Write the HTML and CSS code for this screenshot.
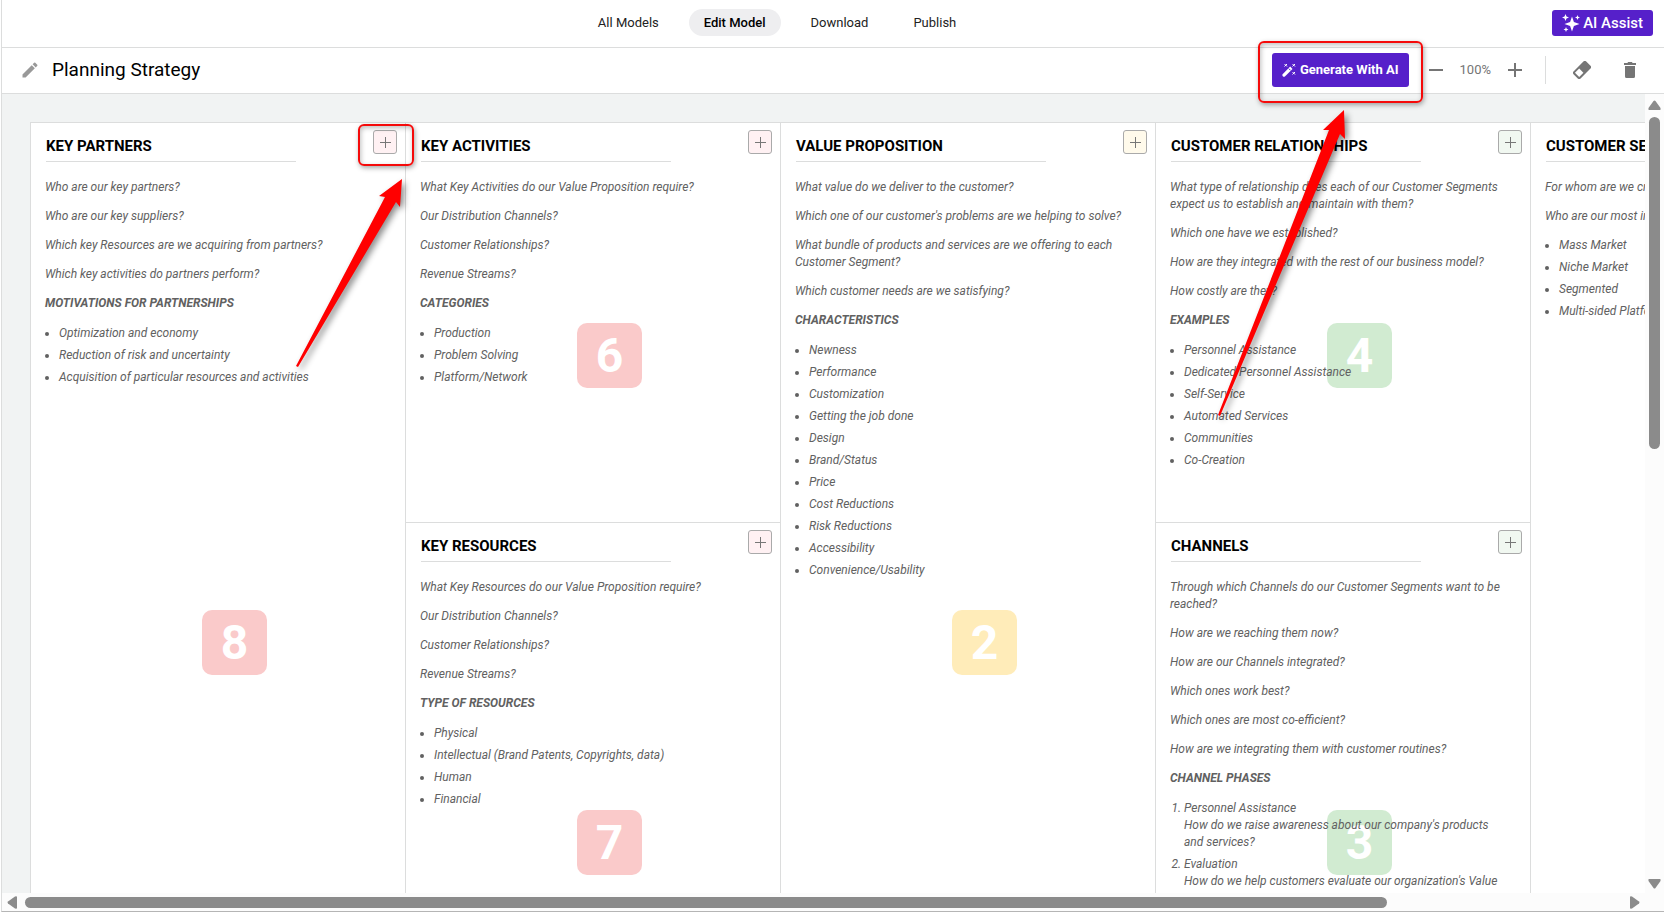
FILE: index.html
```html
<!DOCTYPE html>
<html lang="en">
<head>
    <meta charset="UTF-8">
    <meta name="viewport" content="width=device-width, initial-scale=1.0">
    <title>Planning Strategy</title>
    <link rel="stylesheet" href="styles.css">
</head>
<body>
    <div class="app">
        <header class="header">
            <nav class="tabs">
                <a href="#" class="tab">All Models</a>
                <a href="#" class="tab active">Edit Model</a>
                <a href="#" class="tab">Download</a>
                <a href="#" class="tab">Publish</a>
            </nav>
            <button type="button" class="assist-btn">
                <svg width="18" height="18" viewBox="0 0 18 18" fill="#fff" aria-hidden="true">
                    <path d="M10 2.500 L11.900 8.100 L17.500 10 L11.900 11.900 L10 17.500 L8.100 11.900 L2.500 10 L8.100 8.100 Z"/>
                    <path d="M3.500 0 L4.500 2.500 L7 3.500 L4.500 4.500 L3.500 7 L2.500 4.500 L0 3.500 L2.500 2.500 Z"/>
                    <path d="M15.500 1 L16.200 2.800 L18 3.500 L16.200 4.200 L15.500 6 L14.800 4.200 L13 3.500 L14.800 2.800 Z"/>
                    <path d="M4 13 L4.700 14.800 L6.500 15.500 L4.700 16.200 L4 18 L3.300 16.200 L1.500 15.500 L3.300 14.800 Z"/>
                </svg>
                AI Assist
            </button>
        </header>

        <div class="toolbar">
            <button type="button" class="icon-btn edit-btn" aria-label="Rename">
                <svg width="20" height="20" viewBox="0 0 24 24" fill="#999" aria-hidden="true"><path d="M3 17.250V21h3.750L17.810 9.940l-3.750-3.750L3 17.250zM20.710 7.040a1 1 0 0 0 0-1.410l-2.340-2.340a1 1 0 0 0-1.410 0l-1.830 1.830 3.750 3.750 1.830-1.830z"/></svg>
            </button>
            <h1 class="model-name">Planning Strategy</h1>
            <div class="callout">
                <button type="button" class="generate-btn">
                    <svg width="14" height="14" viewBox="0 0 14 14" aria-hidden="true">
                        <path d="M0.600 11.200 L8.200 3.600 L10.500 5.900 L2.900 13.500 Q1.800 14.200 0.800 13.200 Q0 12.300 0.600 11.200 Z" fill="#fff"/>
                        <path d="M6.800 5.600 L8.500 7.300" stroke="#5620ca"/>
                        <path d="M2.500 1 L5 3.500 M5 1 L2.500 3.500 M10.500 1 L13 3.500 M13 1 L10.500 3.500 M10.500 9 L13 11.500 M13 9 L10.500 11.500" stroke="#fff"/>
                    </svg>
                    Generate With AI
                </button>
                <svg class="arrow arrow-generate" width="140" height="330" viewBox="0 0 140 330" aria-hidden="true">
                    <path d="M127 10 L106 30 L112 30 L1 315 L3 316 L123 34 L128 39 Z"/>
                </svg>
            </div>
            <div class="zoom">
                <button type="button" class="icon-btn" aria-label="Zoom out">
                    <svg width="14" height="14" viewBox="0 0 14 14" aria-hidden="true"><path d="M0 7 H14" stroke="#757575" stroke-width="2"/></svg>
                </button>
                <span class="zoom-value">100%</span>
                <button type="button" class="icon-btn" aria-label="Zoom in">
                    <svg width="14" height="14" viewBox="0 0 14 14" aria-hidden="true"><path d="M0 7 H14 M7 0 V14" stroke="#757575" stroke-width="2"/></svg>
                </button>
            </div>
            <div class="actions">
                <button type="button" class="icon-btn" aria-label="Erase">
                    <svg width="18" height="18" viewBox="0 0 18 18" aria-hidden="true">
                        <g transform="rotate(-45 9 9)">
                            <rect x="0" y="4" width="18" height="10" rx="2" fill="#757575"/>
                            <rect x="2" y="6" width="6" height="6" fill="#fff"/>
                        </g>
                    </svg>
                </button>
                <button type="button" class="icon-btn" aria-label="Delete">
                    <svg width="12" height="16" viewBox="0 0 12 16" fill="#757575" aria-hidden="true"><path d="M0 1 H3.500 L4 0 H8 L8.500 1 H12 V3 H0 Z M1 4 H11 V14.500 Q11 16 9.500 16 H2.500 Q1 16 1 14.500 Z"/></svg>
                </button>
            </div>
        </div>

        <main class="workspace">
            <div class="viewport">
                <div class="board">
                    <section class="cell tall red">
                        <div class="cell-head">
                            <h2>KEY PARTNERS</h2>
                            <div class="add-wrap">
                                <button type="button" class="add-btn" aria-label="Add key partner"></button>
                                <div class="add-frame"></div>
                                <svg class="arrow arrow-add" width="120" height="210" viewBox="0 0 120 210" aria-hidden="true">
                                    <path d="M107 9 L84 26 L90 27 L1 196 L3 197 L101 32 L105 37 Z"/>
                                </svg>
                            </div>
                        </div>
                        <span class="step">8</span>
                        <div class="hints">
                            <p>Who are our key partners?</p>
                            <p>Who are our key suppliers?</p>
                            <p>Which key Resources are we acquiring from partners?</p>
                            <p>Which key activities do partners perform?</p>
                            <h3>MOTIVATIONS FOR PARTNERSHIPS</h3>
                            <ul>
                                <li>Optimization and economy</li>
                                <li>Reduction of risk and uncertainty</li>
                                <li>Acquisition of particular resources and activities</li>
                            </ul>
                        </div>
                    </section>

                    <section class="cell red">
                        <div class="cell-head">
                            <h2>KEY ACTIVITIES</h2>
                            <button type="button" class="add-btn" aria-label="Add key activity"></button>
                        </div>
                        <span class="step">6</span>
                        <div class="hints">
                            <p>What Key Activities do our Value Proposition require?</p>
                            <p>Our Distribution Channels?</p>
                            <p>Customer Relationships?</p>
                            <p>Revenue Streams?</p>
                            <h3>CATEGORIES</h3>
                            <ul>
                                <li>Production</li>
                                <li>Problem Solving</li>
                                <li>Platform/Network</li>
                            </ul>
                        </div>
                    </section>

                    <section class="cell tall yellow">
                        <div class="cell-head">
                            <h2>VALUE PROPOSITION</h2>
                            <button type="button" class="add-btn" aria-label="Add value proposition"></button>
                        </div>
                        <span class="step">2</span>
                        <div class="hints">
                            <p>What value do we deliver to the customer?</p>
                            <p>Which one of our customer's problems are we helping to solve?</p>
                            <p>What bundle of products and services are we offering to each Customer Segment?</p>
                            <p>Which customer needs are we satisfying?</p>
                            <h3>CHARACTERISTICS</h3>
                            <ul>
                                <li>Newness</li>
                                <li>Performance</li>
                                <li>Customization</li>
                                <li>Getting the job done</li>
                                <li>Design</li>
                                <li>Brand/Status</li>
                                <li>Price</li>
                                <li>Cost Reductions</li>
                                <li>Risk Reductions</li>
                                <li>Accessibility</li>
                                <li>Convenience/Usability</li>
                            </ul>
                        </div>
                    </section>

                    <section class="cell green">
                        <div class="cell-head">
                            <h2>CUSTOMER RELATIONSHIPS</h2>
                            <button type="button" class="add-btn" aria-label="Add customer relationship"></button>
                        </div>
                        <span class="step">4</span>
                        <div class="hints">
                            <p>What type of relationship does each of our Customer Segments expect us to establish and maintain with them?</p>
                            <p>Which one have we established?</p>
                            <p>How are they integrated with the rest of our business model?</p>
                            <p>How costly are they?</p>
                            <h3>EXAMPLES</h3>
                            <ul>
                                <li>Personnel Assistance</li>
                                <li>Dedicated Personnel Assistance</li>
                                <li>Self-Service</li>
                                <li>Automated Services</li>
                                <li>Communities</li>
                                <li>Co-Creation</li>
                            </ul>
                        </div>
                    </section>

                    <section class="cell tall">
                        <div class="cell-head">
                            <h2>CUSTOMER SEGMENTS</h2>
                        </div>
                        <div class="hints">
                            <p>For whom are we creating value?</p>
                            <p>Who are our most important customers?</p>
                            <ul>
                                <li>Mass Market</li>
                                <li>Niche Market</li>
                                <li>Segmented</li>
                                <li>Multi-sided Platform</li>
                            </ul>
                        </div>
                    </section>

                    <section class="cell red">
                        <div class="cell-head">
                            <h2>KEY RESOURCES</h2>
                            <button type="button" class="add-btn" aria-label="Add key resource"></button>
                        </div>
                        <span class="step">7</span>
                        <div class="hints">
                            <p>What Key Resources do our Value Proposition require?</p>
                            <p>Our Distribution Channels?</p>
                            <p>Customer Relationships?</p>
                            <p>Revenue Streams?</p>
                            <h3>TYPE OF RESOURCES</h3>
                            <ul>
                                <li>Physical</li>
                                <li>Intellectual (Brand Patents, Copyrights, data)</li>
                                <li>Human</li>
                                <li>Financial</li>
                            </ul>
                        </div>
                    </section>

                    <section class="cell green">
                        <div class="cell-head">
                            <h2>CHANNELS</h2>
                            <button type="button" class="add-btn" aria-label="Add channel"></button>
                        </div>
                        <span class="step">3</span>
                        <div class="hints">
                            <p>Through which Channels do our Customer Segments want to be reached?</p>
                            <p>How are we reaching them now?</p>
                            <p>How are our Channels integrated?</p>
                            <p>Which ones work best?</p>
                            <p>Which ones are most co-efficient?</p>
                            <p>How are we integrating them with customer routines?</p>
                            <h3>CHANNEL PHASES</h3>
                            <ol>
                                <li>Personnel Assistance<br>How do we raise awareness about our company's products and services?</li>
                                <li>Evaluation<br>How do we help customers evaluate our organization's Value</li>
                            </ol>
                        </div>
                    </section>
                </div>
            </div>

            <!-- Scroll bars -->
            <div class="vbar">
                <svg width="13" height="10" viewBox="0 0 13 10" fill="#8b8b8b" aria-hidden="true"><path d="M5.500 1 Q6.500 0 7.500 1 L12.500 8 Q13 10 12 10 H1 Q0 10 0.500 8 Z"/></svg>
                <div class="track"><div class="thumb"></div></div>
                <svg width="13" height="10" viewBox="0 0 13 10" fill="#8b8b8b" aria-hidden="true"><path d="M5.500 9 Q6.500 10 7.500 9 L12.500 2 Q13 0 12 0 H1 Q0 0 0.500 2 Z"/></svg>
            </div>
            <div class="hbar">
                <svg width="10" height="13" viewBox="0 0 10 13" fill="#8b8b8b" aria-hidden="true"><path d="M1 5.500 Q0 6.500 1 7.500 L8 12.500 Q10 13 10 12 V1 Q10 0 8 0.500 Z"/></svg>
                <div class="track"><div class="thumb"></div></div>
                <svg width="10" height="13" viewBox="0 0 10 13" fill="#8b8b8b" aria-hidden="true"><path d="M9 5.500 Q10 6.500 9 7.500 L2 12.500 Q0 13 0 12 V1 Q0 0 2 0.500 Z"/></svg>
            </div>
        </main>
    </div>
</body>
</html>
```
FILE: styles.css
```css
* {
    box-sizing: border-box;
}

body {
    margin: 0;
    font-family: Roboto, "Liberation Sans", sans-serif;
    font-size: 13px;
    color: #222;
    background-color: #fff;
    overflow: hidden;
}

h1, h2, h3, p, ul, ol {
    margin: 0;
    padding: 0;
}

button {
    font-family: inherit;
    cursor: pointer;
}

/* Page shell with the edge of the side panel on the left */
.app {
    display: flex;
    flex-direction: column;
    height: 100vh;
    margin-left: 1px;
    border-left: 1px solid #dcdddd;
    border-bottom: 1px solid #b5b5b5;
}

/* Top navigation */
.header {
    display: flex;
    align-items: center;
    height: 48px;
    padding: 0 11px 2px 0;
    border-bottom: 1px solid #dcdddd;
}

.tabs {
    display: flex;
    flex: 1;
    justify-content: center;
    gap: 15px;
}

.tab {
    padding: 0 15px;
    line-height: 27px;
    border-radius: 14px;
    color: #222;
    text-decoration: none;
}

.tab.active {
    background-color: #eeeef0;
    color: #000;
    font-weight: 500;
}

.assist-btn {
    display: flex;
    align-items: center;
    gap: 3px;
    height: 26px;
    padding: 0 10px;
    border: none;
    border-radius: 3px;
    background-color: #5620ca;
    color: #fff;
    font-size: 15px;
    font-weight: 500;
}

/* Model toolbar */
.toolbar {
    display: flex;
    align-items: center;
    height: 46px;
    padding: 0 28px 2px 18px;
    border-bottom: 1px solid #dcdddd;
}

.icon-btn {
    display: flex;
    padding: 0;
    border: none;
    background: none;
}

.model-name {
    flex: 1;
    margin-left: 12px;
    font-size: 19px;
    font-weight: 400;
    color: #000;
}

.generate-btn {
    display: flex;
    align-items: center;
    gap: 4px;
    height: 34px;
    padding: 0 10px;
    border: none;
    border-radius: 3px;
    background-color: #5620ca;
    color: #fff;
    font-size: 13px;
    font-weight: 700;
}

.zoom {
    display: flex;
    align-items: center;
    gap: 17px;
    margin-left: 20px;
    color: #757575;
}

.actions {
    display: flex;
    align-items: center;
    gap: 33px;
    height: 28px;
    margin-left: 23px;
    padding-left: 27px;
    border-left: 1px solid #dcdddd;
}

/* Red annotations that sit over the page */
.callout, .add-wrap {
    position: relative;
}

.callout::after, .add-frame {
    content: "";
    position: absolute;
    inset: -12px -14px -16px;
    border: 2px solid #f50a0a;
    border-radius: 6px;
    box-shadow: 1px 2px 5px rgba(0, 0, 0, 0.35), inset 1px 2px 5px rgba(0, 0, 0, 0.25);
    pointer-events: none;
}

.add-frame {
    inset: -6px -17px -12px -15px;
}

.arrow {
    position: absolute;
    z-index: 2;
    fill: #f00;
    filter: drop-shadow(3px 3px 3px rgba(0, 0, 0, 0.45));
    pointer-events: none;
}

.arrow-generate {
    top: 47px;
    left: -55px;
}

.arrow-add {
    top: 40px;
    left: -78px;
}

/* Board area */
.workspace {
    flex: 1;
    display: grid;
    grid-template-columns: 1fr 19px;
    grid-template-rows: 1fr 18px;
    min-height: 0;
    background-color: #fcfcfc;
}

.viewport {
    overflow: hidden;
    padding: 28px 0 0 28px;
    background-color: #f1f3f3;
}

.board {
    display: grid;
    grid-template-columns: repeat(5, 375px);
    grid-template-rows: 400px 574px;
    width: max-content;
}

.cell {
    position: relative;
    z-index: 0;
    padding: 7px 8px 0 14px;
    border-top: 1px solid #dcdddd;
    border-left: 1px solid #dcdddd;
    background-color: #fff;
}

.cell:first-child {
    z-index: 1;
}

.tall {
    grid-row: span 2;
}

.cell-head {
    display: flex;
    justify-content: space-between;
    align-items: flex-start;
}

.cell-head h2 {
    width: 250px;
    padding: 8px 0 6px;
    margin-left: 1px;
    border-bottom: 1px solid #dcdddd;
    font-size: 15px;
    font-weight: 700;
    line-height: 17px;
    color: #000;
    white-space: nowrap;
}

.add-btn {
    display: block;
    width: 24px;
    height: 24px;
    padding: 0;
    border: 1px solid #aaa;
    border-radius: 3px;
    /* plus sign */
    background: linear-gradient(#777, #777) center / 11px 1px no-repeat,
        linear-gradient(#777, #777) center / 1px 11px no-repeat,
        var(--tint);
}

/* Suggested order number, behind the hint text */
.step {
    position: absolute;
    z-index: -1;
    top: 50%;
    left: calc(50% - 16px);
    width: 65px;
    border-radius: 10px;
    background-color: var(--step);
    color: #fff;
    font-size: 48px;
    font-weight: 700;
    line-height: 65px;
    text-align: center;
}

.red {
    --tint: #fff1f3;
    --step: #facaca;
}

.yellow {
    --tint: #fffaeb;
    --step: #ffecb9;
}

.green {
    --tint: #f1f8f1;
    --step: #d1ebd1;
}

.hints {
    padding: 17px 16px 0 0;
    font-size: 12px;
    font-style: italic;
    line-height: 17px;
    color: #616161;
}

.hints p {
    margin-bottom: 12px;
}

.hints h3 {
    margin-bottom: 13px;
    font-size: 12px;
    font-weight: 700;
}

.hints ul, .hints ol {
    padding-left: 14px;
}

.hints li {
    margin-bottom: 5px;
}

/* Scroll bars */
.vbar, .hbar {
    display: flex;
    align-items: center;
}

.vbar {
    flex-direction: column;
    padding: 6px 0 4px;
    gap: 7px;
}

.hbar {
    padding: 0 5px;
    gap: 8px;
}

.track {
    flex: 1;
}

.thumb {
    border-radius: 6px;
    background-color: #8b8b8b;
}

.vbar .thumb {
    width: 11px;
    height: 44%;
}

.vbar .track {
    width: 11px;
}

.hbar .thumb {
    width: calc(85% + 5px);
    height: 11px;
}
```
